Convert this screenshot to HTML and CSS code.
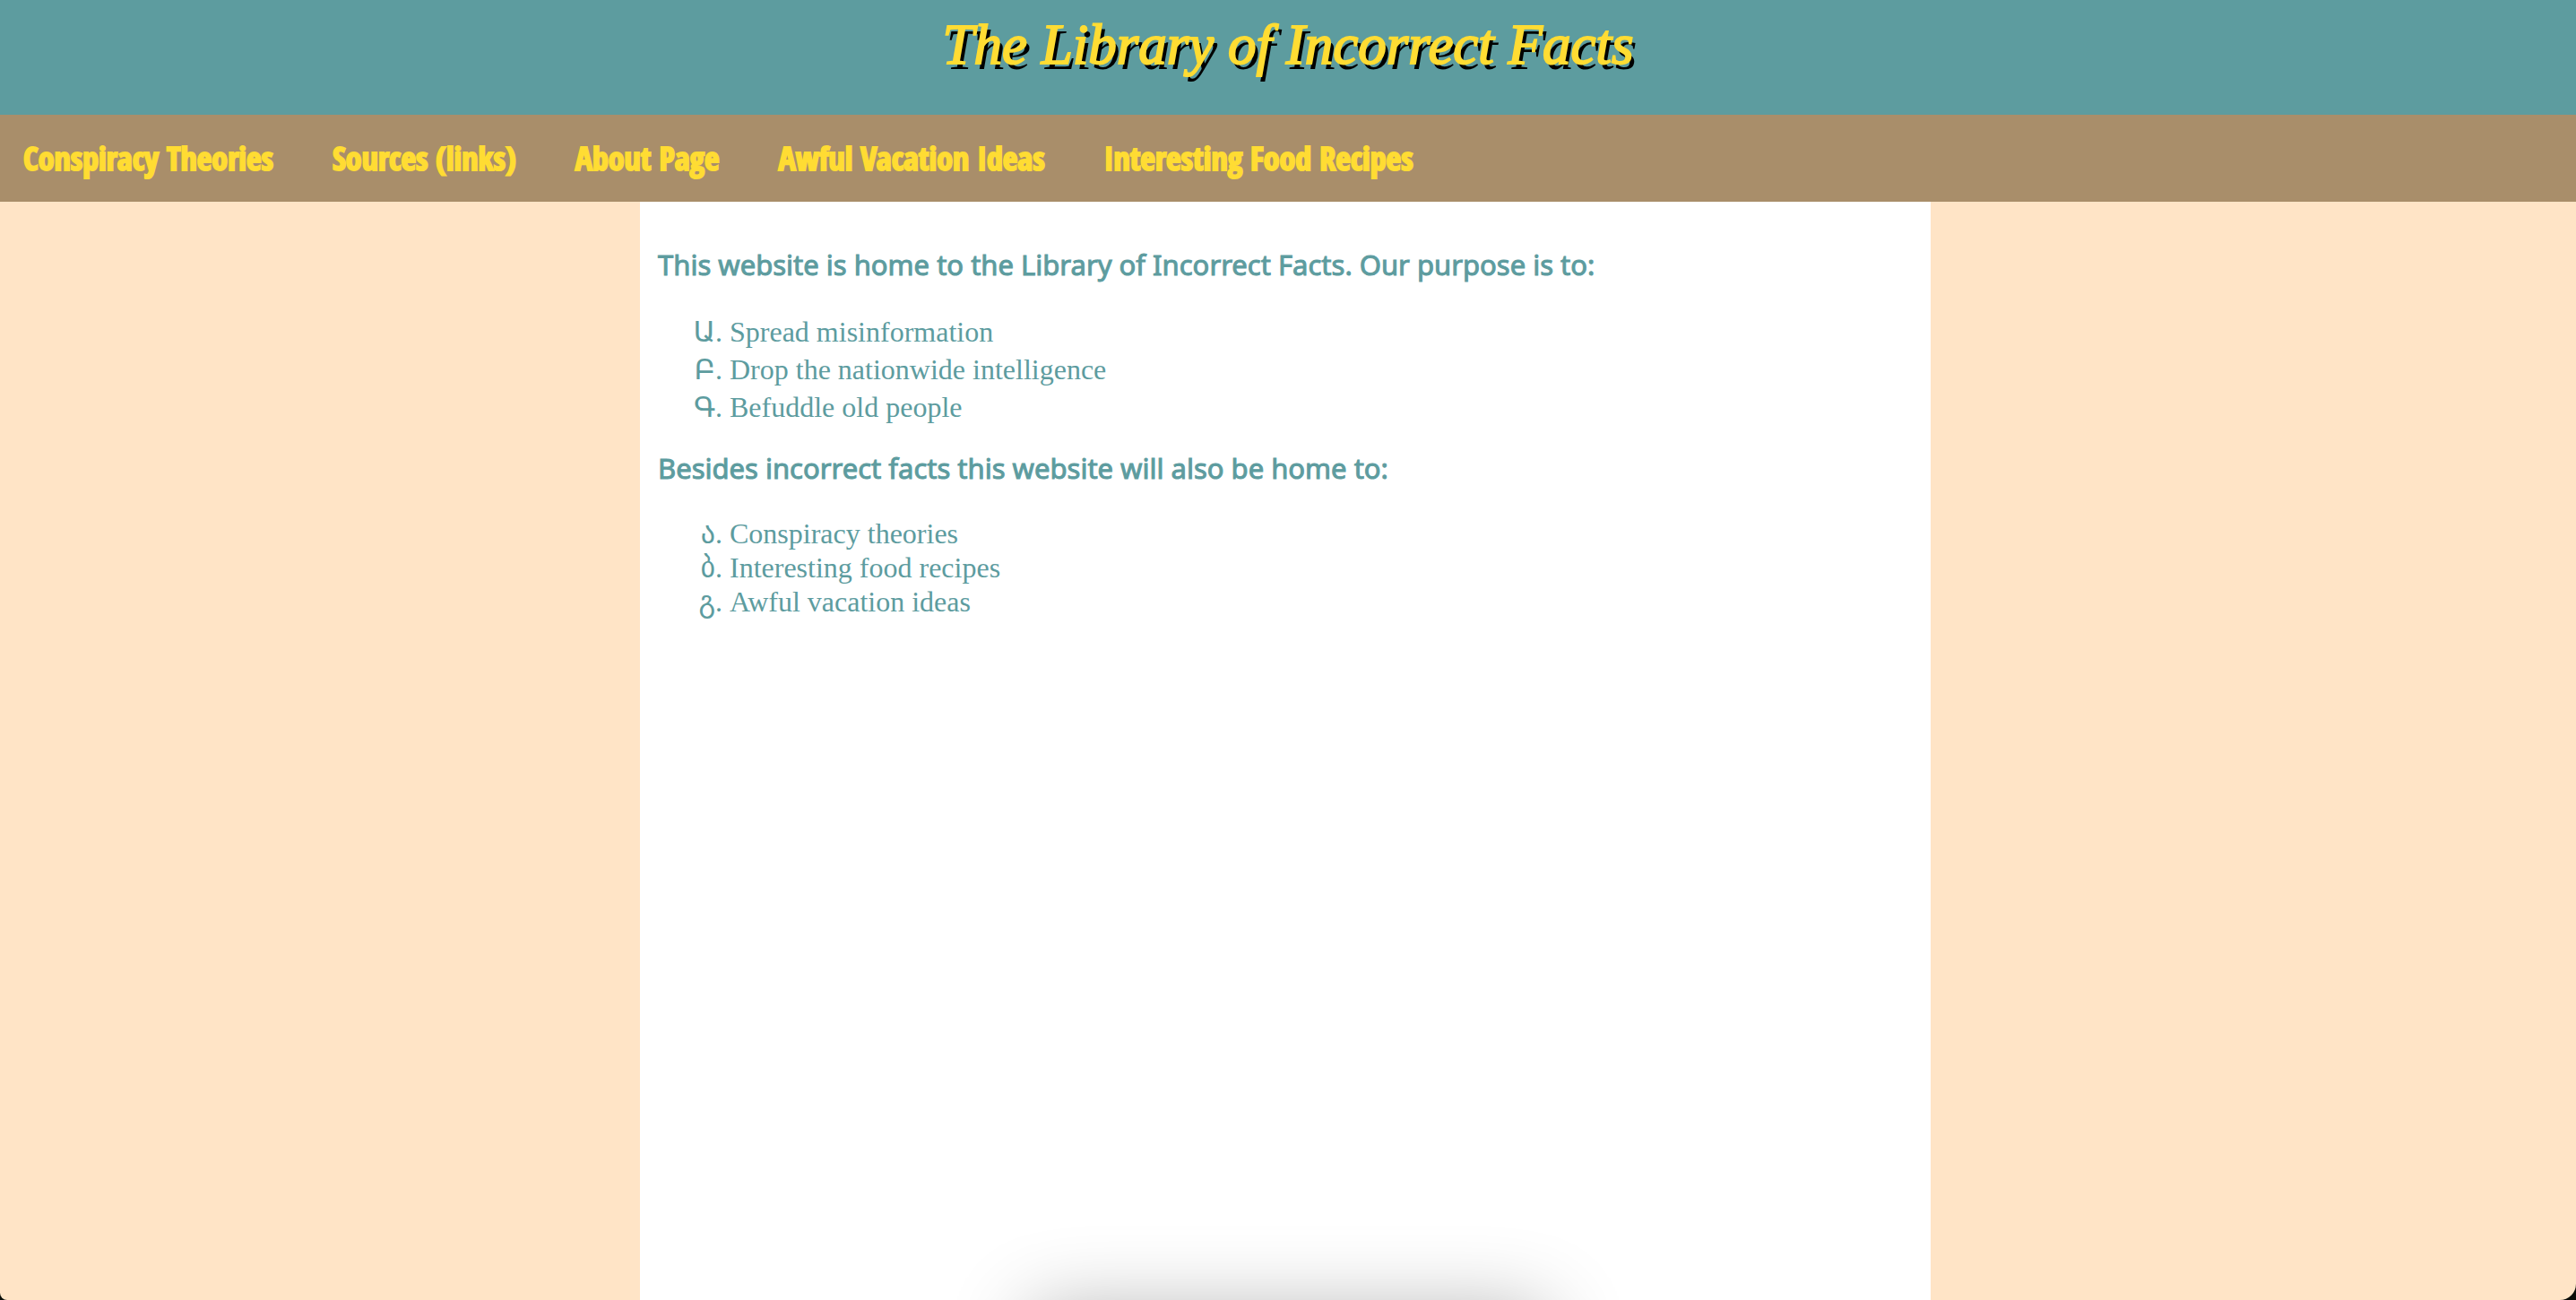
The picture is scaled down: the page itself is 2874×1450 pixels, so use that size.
FILE: index.html
```html
<!DOCTYPE html>
<html lang="en">
<head>
  <meta charset="utf-8">
  <title>The Library of Incorrect Facts</title>
  <link rel="stylesheet" href="styles.css">
</head>
<body>
  <header class="banner">
    <h1 class="banner-title">The Library of Incorrect Facts</h1>
  </header>
  <nav class="site-nav">
    <a class="nav-link" href="#conspiracy">Conspiracy Theories</a>
    <a class="nav-link" href="#sources">Sources (links)</a>
    <a class="nav-link" href="#about">About Page</a>
    <a class="nav-link" href="#vacation">Awful Vacation Ideas</a>
    <a class="nav-link" href="#recipes">Interesting Food Recipes</a>
  </nav>
  <div class="page">
    <main class="content">
      <p class="lead">This website is home to the Library of Incorrect Facts. Our purpose is to:</p>
      <ol class="list list-armenian">
        <li>Spread misinformation</li>
        <li>Drop the nationwide intelligence</li>
        <li>Befuddle old people</li>
      </ol>
      <p class="lead">Besides incorrect facts this website will also be home to:</p>
      <ol class="list list-georgian">
        <li>Conspiracy theories</li>
        <li>Interesting food recipes</li>
        <li>Awful vacation ideas</li>
      </ol>
    </main>
  </div>
</body>
</html>
```
FILE: styles.css
```css
* {
  box-sizing: border-box;
}

html {
  background: #0a0d08;
}

body {
  display: flex;
  flex-direction: column;
  min-height: 100vh;
  margin: 0;
  overflow: hidden;
  border-radius: 0 0 18px 8px;
  background: #ffe4c6;
}

.banner {
  height: 128px;
  background: #5d9c9f;
  text-align: center;
}

.banner-title {
  margin: 0;
  padding-top: 10px;
  color: #ffdc33;
  font: italic 400 63px/80px "Apple Chancery", "Liberation Serif", cursive;
  text-shadow: 4px 6px 0 #000;
  -webkit-text-stroke: 2px #ffdc33;
}

.site-nav {
  display: flex;
  flex-wrap: wrap;
  gap: 66px;
  padding: 24px 26px;
  background: #a98e6a;
}

.nav-link {
  color: #ffdc33;
  font: bold 36px/49px Impact, "Liberation Sans Narrow", "Open Sans Condensed", "DejaVu Sans Condensed", sans-serif;
  text-decoration: none;
  -webkit-text-stroke: 2px #ffdc33;
}

.page {
  display: flex;
  flex: 1;
  justify-content: center;
  padding-right: 6px;
}

.content {
  width: 100%;
  max-width: 1440px;
  padding: 49px 20px;
  background: #fff;
  color: #5d9c9f;
}

.lead {
  margin: 0;
  font: 400 31px/42px "Trebuchet MS", "Noto Sans", sans-serif;
  -webkit-text-stroke: 1px #5d9c9f;
}

.list {
  margin: 33px 0 26px;
  padding-left: 80px;
  font-family: "Liberation Serif", "DejaVu Sans", serif;
  font-size: 32px;
}

.list-armenian {
  line-height: 42px;
  list-style: armenian;
}

.list-georgian {
  line-height: 38px;
  list-style: georgian;
}

/* soft shade rising from the bottom edge of the window */
body::after {
  content: "";
  position: fixed;
  top: calc(100% + 12px);
  left: 40%;
  width: 20%;
  height: 120px;
  box-shadow: 0 0 90px rgba(0, 0, 0, 0.3);
}
```
